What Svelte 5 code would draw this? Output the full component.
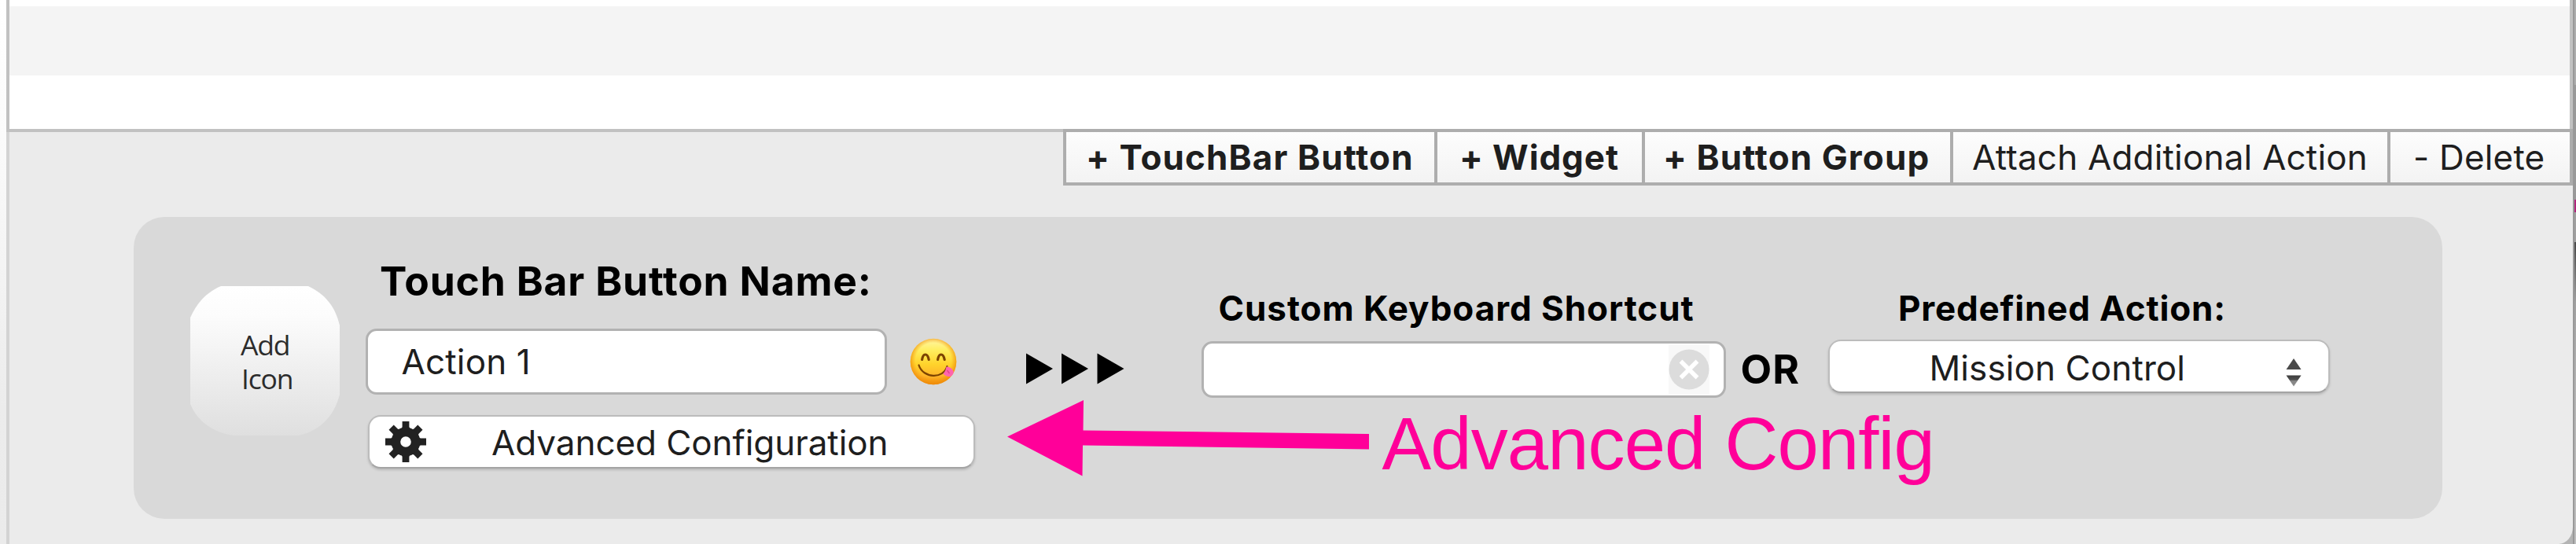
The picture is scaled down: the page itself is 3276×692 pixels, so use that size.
<script>
  const toolbar = [
    { label: '+ TouchBar Button', bold: true, id: 'touchbar' },
    { label: '+ Widget', bold: true, id: 'widget' },
    { label: '+ Button Group', bold: true, id: 'group' },
    { label: 'Attach Additional Action', bold: false, id: 'attach' },
    { label: '- Delete', bold: false, id: 'delete' }
  ];
  const teeth = [0, 45, 90, 135, 180, 225, 270, 315];
</script>

<div class="page">
  <div class="outer-left"></div>
  <main class="window">
    <div class="table">
      <div class="row first"></div>
      <div class="row alt"></div>
      <div class="row last"></div>
    </div>
    <div class="body">
      <nav class="toolbar">
        {#each toolbar as item}
          <button class="tool {item.id}" class:bold={item.bold}>{item.label}</button>
        {/each}
      </nav>

      <section class="panel">
        <button class="add-icon">
          <svg viewBox="0 0 190 190" width="190" height="190" aria-hidden="true">
            <defs>
              <linearGradient id="addFill" x1="0" y1="0" x2="0" y2="1">
                <stop offset="0" stop-color="#ffffff" />
                <stop offset=".2" stop-color="#fcfcfc" />
                <stop offset="1" stop-color="#dfdfdf" />
              </linearGradient>
            </defs>
            <path
              d="M39 0H150C171 10 184 25 190 50V138C182 168 163 184 138 190H56C30 187 9 172 0 150V40C8 22 20 8 39 0Z"
              fill="url(#addFill)"
            />
          </svg>
          <span class="add-text"><span class="line">Add</span><span class="line second">Icon</span></span>
        </button>

        <div class="name-col">
          <h2 class="name-label">Touch Bar Button Name:</h2>
          <div class="name-row">
            <div class="field name-field">Action 1</div>
            <svg class="emoji" viewBox="0 0 60 60" width="60" height="60" aria-hidden="true">
              <defs>
                <linearGradient id="face" x1="0" y1="0" x2="0" y2="1">
                  <stop offset="0" stop-color="#fff6a8" />
                  <stop offset=".25" stop-color="#ffee60" />
                  <stop offset=".55" stop-color="#ffd42c" />
                  <stop offset=".8" stop-color="#ffb62a" />
                  <stop offset="1" stop-color="#f08c08" />
                </linearGradient>
                <radialGradient id="rim" cx=".5" cy=".48" r=".52">
                  <stop offset=".74" stop-color="#f59a0c" stop-opacity="0" />
                  <stop offset="1" stop-color="#ee8a0a" stop-opacity=".85" />
                </radialGradient>
              </defs>
              <circle cx="30" cy="30" r="29.3" fill="url(#face)" />
              <circle cx="30" cy="30" r="29.3" fill="url(#rim)" />
              <g fill="none" stroke="#7c4300" stroke-linecap="round">
                <path d="M15.6 27.5C17 18.8 22.6 18.8 24.2 27.5" stroke-width="3.2" />
                <path d="M35.6 27.5C37 18.8 42.6 18.8 44.2 27.5" stroke-width="3.2" />
                <path d="M11.5 34.5C17 51.5 43 52.5 47.5 36" stroke-width="2.3" />
              </g>
              <path
                d="M46.5 36.5C50 36 54.5 39 55.6 42.5C56 47 52 49.8 49 49C46.2 48.4 43.5 47 42.5 45.2C44.5 43.5 46 40 46.5 36.5Z"
                fill="#ff64ae"
              />
              <path d="M47.5 41L50.5 45" stroke="#e0408e" stroke-width="1.3" fill="none" />
            </svg>
          </div>
          <button class="field advanced">
            <svg class="gear" viewBox="-26 -26 52 52" width="52" height="52" aria-hidden="true">
              {#each teeth as angle}
                <path d="M-6.5 -14L-4.4 -19V-26H4.4V-19L6.5 -14Z" fill="#222" transform="rotate({angle})" />
              {/each}
              <path d="M0 -18.5A18.5 18.5 0 1 1 0 18.5A18.5 18.5 0 1 1 0 -18.5ZM0 -6.8A6.8 6.8 0 1 0 0 6.8A6.8 6.8 0 1 0 0 -6.8Z" fill="#222" fill-rule="evenodd" />
            </svg>
            <span class="advanced-text">Advanced Configuration</span>
          </button>
        </div>

        <svg class="play" viewBox="0 0 125 40" width="125" height="40" aria-hidden="true">
          <path d="M0 .5L34 20L0 39.5ZM45 .5L79 20L45 39.5ZM90.5 .5L124.5 20L90.5 39.5Z" fill="#000" />
        </svg>

        <div class="shortcut-col">
          <h3 class="label">Custom Keyboard Shortcut</h3>
          <div class="field shortcut">
            <span class="clear">
              <svg viewBox="0 0 52 52" width="52" height="52" aria-hidden="true">
                <circle cx="26" cy="26" r="25.5" fill="#dcdcdc" />
                <path d="M15.5 15.5L36.5 36.5M36.5 15.5L15.5 36.5" stroke="#fff" stroke-width="5.5" />
              </svg>
            </span>
          </div>
        </div>

        <span class="or">OR</span>

        <div class="action-col">
          <h3 class="label">Predefined Action:</h3>
          <button class="field select">
            <span class="select-text">Mission Control</span>
            <svg class="stepper" viewBox="0 0 20 36" width="20" height="36" aria-hidden="true">
              <defs>
                <linearGradient id="down" x1="0" y1="0" x2="0" y2="1">
                  <stop offset="0" stop-color="#3c3c3c" />
                  <stop offset=".4" stop-color="#505050" />
                  <stop offset=".5" stop-color="#858585" />
                  <stop offset="1" stop-color="#8c8c8c" />
                </linearGradient>
              </defs>
              <path d="M10 0L19.5 14H.5Z" fill="#4a4a4a" />
              <path d="M.5 21.5H19.5L10 35.5Z" fill="url(#down)" />
            </svg>
          </button>
        </div>

        <div class="callout">
          <svg viewBox="0 0 462 100" width="462" height="100" aria-hidden="true">
            <path d="M0 47.5L97 1L96.5 39.500L460 44V63.5L96 58.500L95.5 97.5Z" fill="#ff0099" />
          </svg>
          <span class="callout-text">Advanced Config</span>
        </div>
      </section>
    </div>
  </main>
  <div class="outer-right">
    <div class="desk-top"></div>
    <div class="desk-mid"></div>
    <div class="desk-mark"></div>
    <div class="desk-gap"></div>
    <div class="desk-low"></div>
  </div>
</div>

<style>
  :global(body) {
    margin: 0;
    background: #b4b4b4;
  }
  .page {
    display: flex;
    width: 3276px;
    height: 692px;
    overflow: hidden;
    font-family: Inter, 'Liberation Sans', sans-serif;
    color: #1e1e1e;
    background: #b4b4b4;
  }
  .outer-left {
    flex: none;
    width: 8px;
    background: linear-gradient(#ffffff, #fbfbfb 25%, #ececec 75%, #ebebeb);
  }
  .window {
    flex: none;
    width: 3264px;
    display: flex;
    flex-direction: column;
  }
  .table {
    flex: none;
    box-sizing: border-box;
    height: 168px;
    border: solid #c1c1c1;
    border-width: 0 4px 4px 4px;
    background: #fff;
  }
  .row.first { height: 8px; }
  .row.alt { height: 88px; background: #f4f4f4; }
  .body {
    flex: 1;
    border-left: 4px solid #d3d3d3;
    background: #ebebeb;
    border-bottom-right-radius: 18px 22px;
  }
  .toolbar {
    display: grid;
    grid-template-columns: 472px 264px 392px 556px 236px;
    justify-content: end;
    box-sizing: border-box;
    height: 72px;
    margin-top: -4px;
  }
  button {
    appearance: none;
    margin: 0;
    padding: 0;
    border: 0;
    background: none;
    font: inherit;
    color: inherit;
    text-align: left;
  }
  .tool {
    box-sizing: border-box;
    font-size: 44px;
    line-height: 64px;
    white-space: pre;
    border: solid #adadad;
    border-width: 4px 0 4px 4px;
    background: linear-gradient(#fdfdfd, #f3f3f3);
    padding-left: 25px;
    letter-spacing: .18px;
  }
  .tool.bold {
    font-weight: 700;
    letter-spacing: 1.1px;
  }
  .tool.widget { padding-left: 28px; letter-spacing: .9px; }
  .tool.group { padding-left: 23px; }
  .tool.attach { padding-left: 24px; }
  .tool.delete { padding-left: 29px; border-right: 4px solid #adadad; }

  .panel {
    position: relative;
    display: flex;
    align-items: flex-start;
    box-sizing: border-box;
    width: 2936px;
    height: 384px;
    margin: 40px 0 0 158px;
    padding-left: 72px;
    border-radius: 39px;
    background: #d9d9d9;
  }
  .add-icon {
    flex: none;
    display: grid;
    width: 190px;
    height: 190px;
    margin-top: 88px;
    font-family: 'Open Sans', 'Noto Sans', sans-serif;
    font-size: 35.5px;
    font-weight: 500;
    line-height: 42.5px;
    color: #2c2c2c;
  }
  .add-icon > * { grid-area: 1 / 1; }
  .add-text {
    display: flex;
    flex-direction: column;
    padding: 53px 0 0 64px;
    letter-spacing: -1.2px;
  }
  .line.second { padding-left: 1px; }

  .name-col {
    flex: none;
    width: 775px;
    margin: 50px 0 0 33px;
  }
  h2, h3 {
    margin: 0;
    color: #000;
    font-weight: 700;
    white-space: nowrap;
  }
  .name-label {
    padding-left: 18px;
    font-size: 51.5px;
    line-height: 62px;
    letter-spacing: .85px;
  }
  .name-row {
    display: flex;
    align-items: center;
    margin-top: 30px;
  }
  .field {
    box-sizing: border-box;
    border: 3px solid #b2b2b2;
    border-radius: 14px;
    background: #fff;
    font-size: 44px;
    white-space: nowrap;
  }
  .name-field {
    width: 663px;
    height: 84px;
    padding-left: 42.5px;
    line-height: 78px;
    letter-spacing: .15px;
  }
  .emoji { margin-left: 29px; }
  .advanced {
    display: flex;
    width: 772px;
    height: 68px;
    margin: 26px 0 0 3px;
    padding-left: 20px;
  }
  .advanced, .select {
    border: 2px solid #bcbcbc;
    border-bottom-color: #a4a4a4;
    box-shadow: 0 2px 3px #b8b8b8;
    border-radius: 16px;
  }
  .gear { margin-top: 6px; }
  .advanced-text {
    margin-left: 83px;
    line-height: 67px;
    letter-spacing: -.07px;
  }
  .play {
    flex: none;
    margin: 173px 0 0 64.5px;
  }
  .shortcut-col {
    flex: none;
    width: 667px;
    margin: 88px 0 0 98.5px;
  }
  .label {
    font-size: 44px;
    line-height: 56px;
  }
  .shortcut-col .label {
    padding-left: 21.5px;
    letter-spacing: .94px;
  }
  .shortcut {
    display: flex;
    justify-content: flex-end;
    height: 72px;
    margin-top: 14px;
    padding-right: 18px;
  }
  .clear {
    display: flex;
    align-items: center;
    height: 64px;
    margin-top: 1px;
    background: #f8f8f8;
  }
  .or {
    flex: none;
    width: 93px;
    margin: 162px 0 0 18.5px;
    color: #000;
    font-size: 51.5px;
    font-weight: 700;
    line-height: 62px;
    letter-spacing: 1px;
  }
  .action-col {
    flex: none;
    width: 638px;
    margin: 88px 0 0 18px;
  }
  .action-col .label {
    padding-left: 89.5px;
    letter-spacing: .82px;
  }
  .select {
    display: flex;
    justify-content: space-between;
    width: 638px;
    height: 68px;
    margin-top: 12px;
    padding: 0 34px 0 127px;
    line-height: 69px;
    letter-spacing: .1px;
  }
  .stepper { margin-top: 22px; }

  /* Annotation laid over the panel */
  .callout {
    position: absolute;
    left: 1111px;
    top: 232px;
    display: flex;
    color: #ff0099;
  }
  .callout-text {
    margin-left: 14.5px;
    font: 94px/100px 'Liberation Sans', Arial, sans-serif;
    letter-spacing: -.9px;
    padding-top: 7px;
    white-space: nowrap;
  }

  .outer-right {
    flex: none;
    box-sizing: border-box;
    width: 4px;
    border-left: 2px solid #999;
    background: #b0b0b0;
  }
  .desk-top { height: 108px; background: #adadad; }
  .desk-mid { height: 146px; background: #999; }
  .desk-mark { height: 16px; background: #b0247c; }
  .desk-gap { height: 38px; background: #a0a0a0; }
  .desk-low { height: 384px; background: linear-gradient(#484848, #a0a0a0 20%, #b4b4b4 50%, #bebebe); }
</style>
